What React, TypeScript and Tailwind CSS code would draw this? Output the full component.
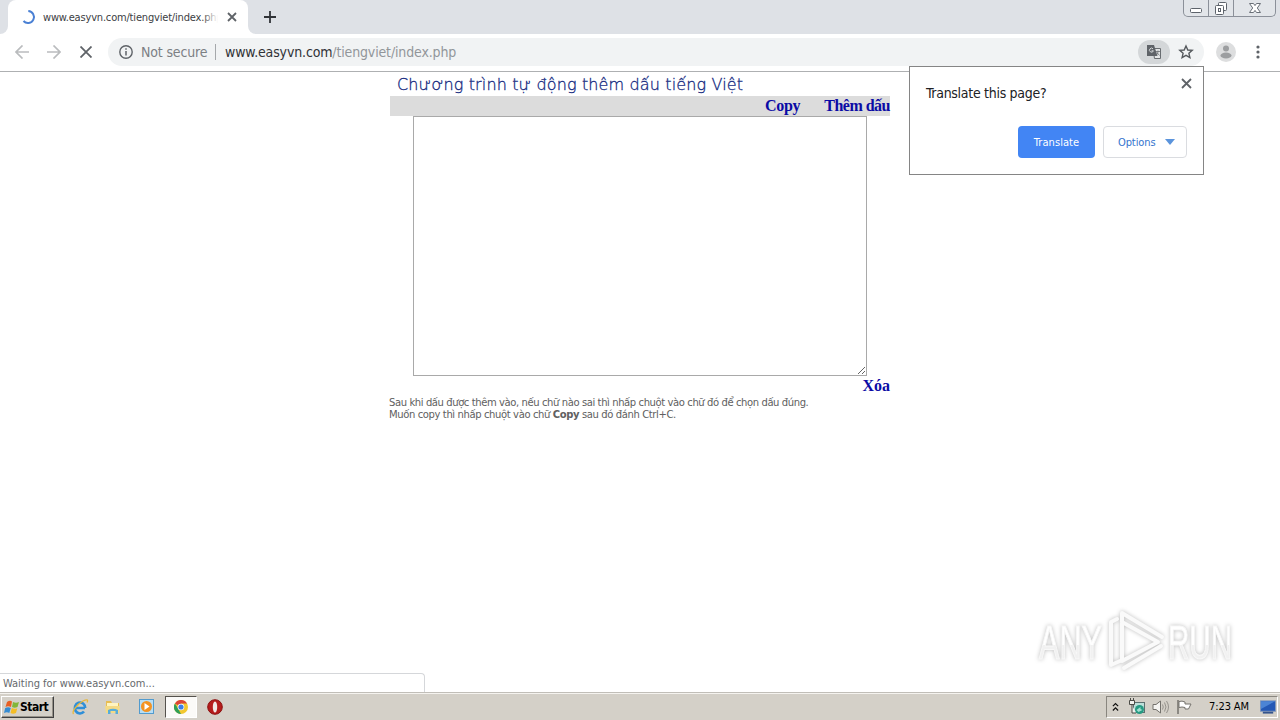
import { ReactNode } from "react";

function TabStrip() {
  return (
    <header className="flex h-[34px] shrink-0 items-end justify-between bg-[#dee1e6]">
      <div className="flex h-full items-end">
        <div className="h-2 w-2 bg-white">
          <div className="h-2 w-2 rounded-br-lg bg-[#dee1e6]" />
        </div>
        <div className="flex h-full w-60 items-center rounded-t-lg bg-white pl-3">
          <svg width="16" height="16" viewBox="0 0 16 16" fill="none">
            <path d="M8.3 2a6 6 0 1 1-4.8 10" stroke="#4a80d4" strokeWidth="2" />
          </svg>
          <div className="relative ml-[7px] mt-px w-[175px] overflow-hidden whitespace-nowrap pt-px text-[11px] tracking-[-0.18px] text-[#3c4043]">
            www.easyvn.com/tiengviet/index.php
            <div className="absolute inset-y-0 right-0 w-4 bg-linear-to-r from-transparent to-white" />
          </div>
          <svg className="ml-[9px]" width="10" height="10" viewBox="0 0 10 10">
            <path d="M1 1l8 8M9 1L1 9" stroke="#5f6368" strokeWidth="1.8" />
          </svg>
        </div>
        <div className="h-2 w-2 bg-white">
          <div className="h-2 w-2 rounded-bl-lg bg-[#dee1e6]" />
        </div>
        <svg className="mb-[11px] ml-2" width="12" height="12" viewBox="0 0 12 12">
          <path d="M6 0v12M0 6h12" stroke="#303338" strokeWidth="1.8" />
        </svg>
      </div>
      <WindowButtons />
    </header>
  );
}

function WindowButtons() {
  return (
    <div className="mr-1 flex h-[17px] w-[93px] self-start rounded-b-[5px] border border-t-0 border-[#8b9099] bg-[#e2e5e9]">
      <div className="flex w-[25px] justify-center border-r border-[#8b9099]">
        <svg width="14" height="16" viewBox="0 0 14 16" fill="none">
          <rect x="1.500" y="8.500" width="11" height="4" rx="1" fill="#fff" stroke="#5d636b" />
        </svg>
      </div>
      <div className="flex w-[25px] justify-center border-r border-[#8b9099]">
        <svg width="14" height="16" viewBox="0 0 14 16" fill="none">
          <rect x="4.500" y="2.500" width="8" height="8" rx="1" fill="#fff" stroke="#5d636b" />
          <rect x="1.500" y="5.500" width="8" height="9" rx="1" fill="#fff" stroke="#5d636b" />
          <rect x="4.500" y="8.500" width="2" height="3" stroke="#5d636b" />
        </svg>
      </div>
      <div className="flex flex-1 justify-center">
        <svg width="14" height="16" viewBox="0 0 14 16">
          <path
            d="M1.500 3.500h4L7 5.600l1.500-2.100h4L9.300 8l3.200 4.500h-4L7 10.400l-1.500 2.100h-4L4.700 8z"
            fill="#fff"
            stroke="#696f77"
          />
        </svg>
      </div>
    </div>
  );
}

function Toolbar() {
  return (
    <div className="flex h-[38px] shrink-0 items-center border-b border-[#aeb0b2] bg-white pb-px">
      <svg className="ml-[15px]" width="14" height="14" viewBox="0 0 14 14" fill="none">
        <path d="M14 7H1M7.500.5L1 7l6.500 6.500" stroke="#babcbe" strokeWidth="1.700" />
      </svg>
      <svg className="ml-[18px]" width="14" height="14" viewBox="0 0 14 14" fill="none">
        <path d="M0 7h13M6.500.5L13 7l-6.500 6.500" stroke="#babcbe" strokeWidth="1.700" />
      </svg>
      <svg className="ml-[19px]" width="12" height="12" viewBox="0 0 12 12">
        <path d="M.5.5l11 11M11.500.5l-11 11" stroke="#5f6368" strokeWidth="1.800" />
      </svg>

      {/* Address bar */}
      <div className="ml-4 flex h-7 w-[1096px] items-center whitespace-nowrap rounded-full bg-[#f1f3f4] pl-[11px] pr-2.5 text-[14px]">
        <svg width="14" height="14" viewBox="0 0 14 14" fill="none">
          <circle cx="7" cy="7" r="6.200" stroke="#5f6368" strokeWidth="1.400" />
          <path d="M7 6v4.500M7 3.200v1.600" stroke="#5f6368" strokeWidth="1.500" />
        </svg>
        <span className="ml-2 w-[67px] tracking-[-0.15px] text-[#7c8084]">Not secure</span>
        <div className="ml-[7px] h-4 w-px bg-[#a5a8ab]" />
        <div className="ml-[9px] flex-1 tracking-[-0.15px] text-[#92969a]">
          <span className="text-[#303236]">www.easyvn.com</span>/tiengviet/index.php
        </div>
        <div className="flex h-6 w-8 items-center justify-center rounded-full bg-[#d4d7d9]">
          <svg width="16" height="16" viewBox="0 0 16 16" fill="none">
            <path d="M7 4.500h7.500v10h-6z" fill="#e3e5e6" stroke="#696d71" />
            <path d="M1 1h7l3.500 11H1z" fill="#5f6368" />
            <path d="M7 4.800a2 2 0 1 0 .4 2H5.600" stroke="#d5d8da" strokeWidth="1" />
            <path d="M10 7.500h4M12 6.500v1c-.2 2-1 3-2 4M11 8.500l2.500 3" stroke="#696d71" strokeWidth=".8" />
          </svg>
        </div>
        <svg className="ml-2" width="16" height="16" viewBox="0 0 16 16" fill="none">
          <path
            d="M8 2l1.800 4 4.400.4-3.300 2.900 1 4.200L8 11.300l-3.900 2.200 1-4.200-3.300-2.900 4.400-.4z"
            stroke="#55595d"
            strokeWidth="1.400"
          />
        </svg>
      </div>

      <svg className="ml-3" width="20" height="20" viewBox="0 0 20 20">
        <circle cx="10" cy="10" r="10" fill="#dddedf" />
        <circle cx="10" cy="6.500" r="3" fill="#9c9ea0" />
        <ellipse cx="10" cy="13.500" rx="5.500" ry="3" fill="#9c9ea0" />
      </svg>
      <svg className="ml-5" width="4" height="14" viewBox="0 0 4 14" fill="#5f6368">
        <circle cx="2" cy="2" r="1.600" />
        <circle cx="2" cy="7" r="1.600" />
        <circle cx="2" cy="12" r="1.600" />
      </svg>
    </div>
  );
}

function TranslateBubble() {
  return (
    <div className="absolute left-[909px] top-[66px] h-[109px] w-[295px] border border-[#858585] bg-white pl-4 pr-4">
      <div className="flex h-[59px] justify-between">
        <p className="mt-[17px] whitespace-nowrap text-[14px] leading-[18px] tracking-[-0.29px] text-[#202124]">
          Translate this page?
        </p>
        <svg className="-mr-[5px] mt-[11px]" width="11" height="11" viewBox="0 0 11 11">
          <path d="M1 1l9 9M10 1l-9 9" stroke="#5f6368" strokeWidth="1.800" />
        </svg>
      </div>
      <div className="flex justify-end gap-2 text-[11px]">
        <button className="h-8 w-[77px] rounded bg-[#4285f4] pt-[2px] tracking-[0.06px] text-white">
          Translate
        </button>
        <button className="flex h-8 w-[84px] items-center rounded border border-[#dadce0] pl-3.5 tracking-[-0.1px] text-[#3474ce]">
          <span className="w-[47px] pt-[2px] text-left">Options</span>
          <svg width="10" height="6" viewBox="0 0 10 6">
            <path d="M0 0h10L5 6z" fill="#5b94dc" />
          </svg>
        </button>
      </div>
    </div>
  );
}

function Page() {
  return (
    <main className="relative flex-1 bg-white">
      <div className="mx-auto w-[500px]">
        <h1 className="h-6 whitespace-nowrap pl-[7px] pt-px font-['DejaVu_Sans',sans-serif] text-[16px] font-extralight leading-6 tracking-[0.14px] text-[#142a80] [-webkit-text-stroke:0.3px_#142a80]">
          Chương trình tự động thêm dấu tiếng Việt
        </h1>
        <div className="flex h-5 justify-end gap-6 bg-[#dcdcdc] font-['Liberation_Serif',serif] text-[16px] font-bold leading-5 text-[#0b0ba5]">
          <a className="tracking-[-0.3px]">Copy</a>
          <a className="tracking-[-0.5px]">Thêm dấu</a>
        </div>
        <textarea className="mx-auto block h-[260px] w-[454px] resize border border-[#a9a9a9] bg-white" />
        <div className="h-[21px] text-right font-['Liberation_Serif',serif] text-[16px] font-bold leading-5 text-[#0b0ba5]">
          Xóa
        </div>
        <p className="-ml-px whitespace-nowrap font-['DejaVu_Sans',sans-serif] text-[10px] leading-3 tracking-[-0.4px] text-[#606060]">
          Sau khi dấu được thêm vào, nếu chữ nào sai thì nhấp chuột vào chữ đó để chọn dấu đúng.
          <br />
          <span className="tracking-[-0.38px]">
            Muốn copy thì nhấp chuột vào chữ <b>Copy</b> sau đó đánh Ctrl+C.
          </span>
        </p>
      </div>
      <Watermark />
      <div className="absolute bottom-0 left-0 h-[19px] w-[425px] rounded-tr border-r border-t border-[#d5d7da] bg-white pl-[3px] text-[11px] leading-[19px] tracking-[-0.02px] text-[#66696c]">
        Waiting for www.easyvn.com...
      </div>
    </main>
  );
}

function Watermark() {
  return (
    <svg
      className="absolute bottom-[10px] left-[1030px] drop-shadow-[0_0_2px_#bdbdbd]"
      width="216"
      height="74"
      viewBox="0 0 216 74"
      fill="none"
    >
      <defs>
        <linearGradient id="mark" x1="0" y1="0" x2="0" y2="1">
          <stop offset=".55" stopColor="#fff" />
          <stop offset=".55" stopColor="#f1f1f1" />
        </linearGradient>
      </defs>
      <g
        fill="url(#mark)"
        fontFamily="Liberation Sans Narrow, Liberation Sans, sans-serif"
        fontSize="48"
        stroke="#f8f8f8"
        strokeWidth="1.2"
      >
        <text x="9" y="51" textLength="63" lengthAdjust="spacingAndGlyphs">ANY</text>
        <text x="138" y="51" textLength="64" lengthAdjust="spacingAndGlyphs">RUN</text>
      </g>
      <g stroke="#fafafa" strokeWidth="4" strokeLinejoin="round" strokeLinecap="round">
        <path d="M92 49V5l40 24M92 14l36 20-36 19V14" />
        <path d="M87 11l-6 3v43l9-4M94 60l37-22" />
      </g>
    </svg>
  );
}

function TaskIcon({ children }: { children: ReactNode }) {
  return (
    <svg className="shrink-0" width="18" height="18" viewBox="0 0 18 18" fill="none">
      {children}
    </svg>
  );
}

function Taskbar() {
  return (
    <footer className="flex h-7 shrink-0 items-center border-t border-[#c1beb8] bg-[#d4d0c8] pb-px shadow-[inset_0_1px_0_#f5f3ef]">
      <button className="ml-px mt-0.5 flex h-[22px] w-[53px] items-center border border-b-[#404040] border-l-white border-r-[#404040] border-t-white pl-[2px] text-[12px] font-bold tracking-[-0.5px] text-black shadow-[inset_-1px_-1px_0_#969289]">
        <svg className="shrink-0" width="16" height="16" viewBox="0 0 16 16">
          <path d="M3 3q3-2 5-.5L7 8Q4 6.500 1.500 8z" fill="#e86024" />
          <path d="M9 3q3 1.500 6 0l-1.500 5q-3 1.500-5.500 0z" fill="#82b638" />
          <path d="M1.200 9q3-1.500 5.600 0l-1.500 5Q3 12.500 0 14z" fill="#368cd2" />
          <path d="M7.800 9q3 1.500 5.500.2L12 14q-3 1.500-5.500 0z" fill="#f4bd25" />
        </svg>
        <span>Start</span>
      </button>

      {/* Quick launch */}
      <div className="ml-[17px] mt-0.5 flex items-center">
        <TaskIcon>
          <path d="M14 10H5M14.200 10A5.200 5.500 0 1 0 13 13.500" stroke="#2f8fd8" strokeWidth="2.600" />
          <path d="M2.500 16C.5 13.500 6 6.500 12 3c4-2 5.500-1.500 4 1.500" stroke="#e8b83b" strokeWidth="1.300" />
        </TaskIcon>
        <div className="w-[15px]" />
        <TaskIcon>
          <path d="M2 3h5l1 2h7v10H2z" fill="#e8bd52" />
          <path d="M3 5h11v5H3z" fill="#fff4bf" />
          <path d="M1 8h15l-1 7H2z" fill="#f4da85" />
          <path d="M4 16v-4q5-2.500 10 0v4h-2.500v-3h-5v3z" fill="#57acd9" />
        </TaskIcon>
        <div className="w-4" />
        <TaskIcon>
          <rect x="1.500" y="1.500" width="14" height="14" fill="#b7def5" stroke="#529bce" />
          <circle cx="8.500" cy="8.500" r="5.500" fill="#f39322" />
          <path d="M6.500 5v7l5-3.500z" fill="#fff" />
        </TaskIcon>
        <div className="ml-[9px] flex h-[22px] w-8 items-center justify-center border border-b-white border-l-[#55524d] border-r-white border-t-[#55524d] bg-[#fbfaf8]">
          <svg width="14" height="14" viewBox="0 0 14 14">
            <circle cx="7" cy="7" r="7" fill="#f2c72f" />
            <path d="M7 7L.9 3.500A7 7 0 0 1 13.100 3.500H7z" fill="#dc4537" />
            <path d="M.9 3.500L4.300 9 7 14A7 7 0 0 1 .9 3.500z" fill="#2f9f57" />
            <circle cx="7" cy="7" r="3.300" fill="#fff" />
            <circle cx="7" cy="7" r="2.600" fill="#3c7ee8" />
          </svg>
        </div>
        <svg className="ml-[10px]" width="16" height="16" viewBox="0 0 16 16">
          <circle cx="8" cy="8" r="7.300" fill="#b51b1b" stroke="#8c1010" />
          <ellipse cx="8" cy="8" rx="2.200" ry="5.500" fill="#f1e7e4" />
        </svg>
      </div>

      {/* Notification area */}
      <div className="ml-auto mr-0.5 mt-0.5 flex h-[22px] w-[172px] items-center border border-b-white border-l-[#89867f] border-r-white border-t-[#89867f] pl-[5px]">
        <svg width="7" height="10" viewBox="0 0 8 10" fill="none">
          <path d="M1 4l3-3 3 3M1 9l3-3 3 3" stroke="#111" strokeWidth="1.400" />
        </svg>
        <svg className="ml-[9px]" width="18" height="18" viewBox="0 0 18 18" fill="none">
          <rect x="5.500" y="4.500" width="11" height="10" fill="#bce0da" stroke="#5c6f70" />
          <circle cx="11.500" cy="11.500" r="4.500" fill="#269a82" />
          <path d="M8.500 12l4-3v2l2 1-4 2z" fill="#a3ded0" />
          <path d="M1.500 2.500h5v4h-5zM2.500 0v2M5.500 0v2M4 7v8h4" fill="#f2f1ed" stroke="#4b4b46" />
        </svg>
        <svg className="ml-[6px]" width="17" height="16" viewBox="0 0 17 16" fill="none">
          <path d="M1 5.500h3L8.500 2v12L4 10.500H1z" fill="#f5f4f1" stroke="#74726d" />
          <path d="M10.500 5.500q1.500 2.500 0 5M12.500 3.500q3 4.500 0 9M14.500 2q4 6 0 12" stroke="#96938d" />
        </svg>
        <svg className="ml-[7px]" width="17" height="16" viewBox="0 0 17 16" fill="none">
          <path d="M2 1v14" stroke="#74726d" strokeWidth="1.500" />
          <path d="M3 2.500q3-1 6 .5v2h6l-2.500 5H9V8.500Q6 7.500 3 8.500z" fill="#fff" stroke="#74726d" />
        </svg>
        <span className="ml-4 w-[43px] whitespace-nowrap text-[11px] tracking-[-0.1px] text-black">7:23 AM</span>
        <svg className="ml-2" width="16" height="14" viewBox="0 0 17 14">
          <rect x=".5" y=".5" width="16" height="11" fill="#2458b5" stroke="#8197ba" />
          <path d="M1 1h15L1 9z" fill="#4c84d5" />
          <path d="M3 13h11" stroke="#34548c" strokeWidth="2" />
        </svg>
      </div>
    </footer>
  );
}

export default function App() {
  return (
    <div className="relative flex h-[720px] w-[1280px] flex-col overflow-hidden bg-white font-['DejaVu_Sans_Condensed','DejaVu_Sans',sans-serif]">
      <TabStrip />
      <Toolbar />
      <Page />
      <Taskbar />
      <TranslateBubble />
    </div>
  );
}
